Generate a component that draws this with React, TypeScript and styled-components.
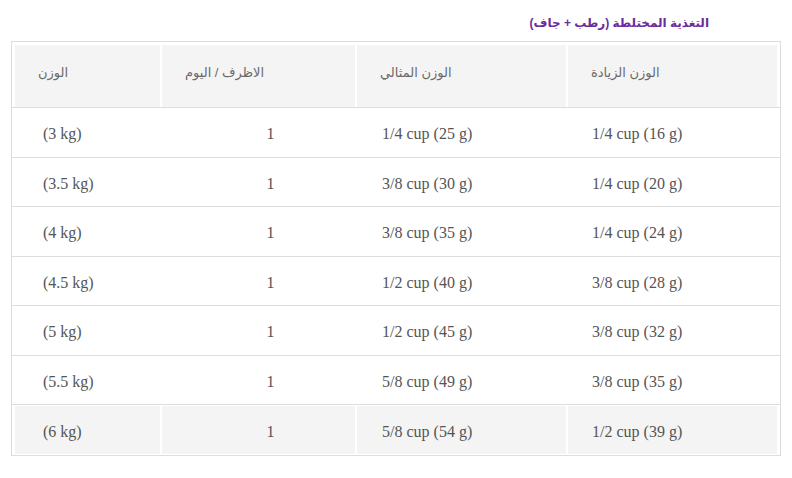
import React from "react";
import styled, { createGlobalStyle } from "styled-components";

const Global = createGlobalStyle`
  html, body { margin: 0; padding: 0; background: #ffffff; }
  body { font-family: "Liberation Serif", "DejaVu Sans", serif; }
`;

const Page = styled.div`
  width: 792px;
  padding: 0 0 0 11px;
  box-sizing: border-box;
`;

const Title = styled.div`
  height: 41px;
  box-sizing: border-box;
  padding: 14px 72px 0 0;
  direction: rtl;
  text-align: right;
  width: 770px;
  font-family: "Liberation Sans", "DejaVu Sans", sans-serif;
  font-weight: bold;
  font-size: 12px;
  line-height: 18px;
  color: #6b2c9c;
`;

const Table = styled.div`
  width: 770px;
  box-sizing: border-box;
  border: 1px solid #dddddd;
`;

const cols = `145px 193px 209px 209px`;

const HeadRow = styled.div`
  display: grid;
  grid-template-columns: ${cols};
  column-gap: 2px;
  padding: 3px 3px 0 3px;
  border-bottom: 1px solid #dddddd;
`;

const HeadCell = styled.div`
  height: 62px;
  background: #f4f4f4;
  display: flex;
  align-items: center;
  justify-content: flex-start;
  padding: 0 0 8px 23px;
  box-sizing: border-box;
  font-family: "Liberation Sans", "DejaVu Sans", sans-serif;
  font-size: 13px;
  color: #6a6a6a;
`;

const HeadText = styled.span`
  direction: rtl;
  unicode-bidi: isolate;
`;

const BodyRow = styled.div<{ $last?: boolean }>`
  display: grid;
  grid-template-columns: ${cols};
  column-gap: 2px;
  padding: ${(p) => (p.$last ? "1px 3px" : "0 3px")};
  height: ${(p) => (p.$last ? "50px" : "49.5px")};
  box-sizing: border-box;
  border-bottom: ${(p) => (p.$last ? "none" : "1px solid #dddddd")};
`;

const Cell = styled.div<{ $center?: boolean; $pad: number; $grey?: boolean }>`
  display: flex;
  align-items: center;
  justify-content: ${(p) => (p.$center ? "center" : "flex-start")};
  padding-left: ${(p) => p.$pad}px;
  padding-top: 4px;
  box-sizing: border-box;
  background: ${(p) => (p.$grey ? "#f4f4f4" : "transparent")};
  font-family: "Liberation Serif", serif;
  font-size: 16px;
  color: #555555;
  white-space: nowrap;
`;

const headers = ["الوزن", "الاظرف / اليوم", "الوزن المثالي", "الوزن الزيادة"];

const rows: [string, string, string, string][] = [
  ["(3 kg)", "1", "1/4 cup (25 g)", "1/4 cup (16 g)"],
  ["(3.5 kg)", "1", "3/8 cup (30 g)", "1/4 cup (20 g)"],
  ["(4 kg)", "1", "3/8 cup (35 g)", "1/4 cup (24 g)"],
  ["(4.5 kg)", "1", "1/2 cup (40 g)", "3/8 cup (28 g)"],
  ["(5 kg)", "1", "1/2 cup (45 g)", "3/8 cup (32 g)"],
  ["(5.5 kg)", "1", "5/8 cup (49 g)", "3/8 cup (35 g)"],
  ["(6 kg)", "1", "5/8 cup (54 g)", "1/2 cup (39 g)"],
];

const pads = [28, 24, 25, 24];

export default function App() {
  return (
    <Page>
      <Global />
      <Title>التغذية المختلطة (رطب + جاف)</Title>
      <Table>
        <HeadRow>
          {headers.map((h) => (
            <HeadCell key={h}>
              <HeadText>{h}</HeadText>
            </HeadCell>
          ))}
        </HeadRow>
        {rows.map((r, i) => {
          const last = i === rows.length - 1;
          return (
            <BodyRow key={i} $last={last}>
              {r.map((c, j) => (
                <Cell key={j} $pad={pads[j]} $center={j === 1} $grey={last}>
                  {c}
                </Cell>
              ))}
            </BodyRow>
          );
        })}
      </Table>
    </Page>
  );
}
